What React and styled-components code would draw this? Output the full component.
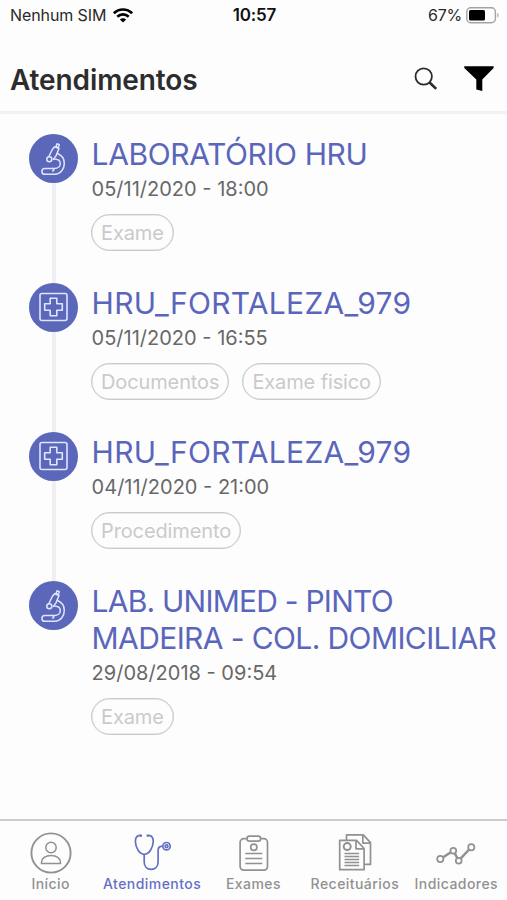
import React from "react";
import styled, { createGlobalStyle } from "styled-components";

const appointments = [
  { id: 1, type: "lab", name: ["LABORATÓRIO HRU"], spacing: [-0.4], date: "05/11/2020 - 18:00", tags: ["Exame"] },
  { id: 2, type: "hospital", name: ["HRU_FORTALEZA_979"], spacing: [0.3], date: "05/11/2020 - 16:55", tags: ["Documentos", "Exame fisico"] },
  { id: 3, type: "hospital", name: ["HRU_FORTALEZA_979"], spacing: [0.3], date: "04/11/2020 - 21:00", tags: ["Procedimento"] },
  { id: 4, type: "lab", name: ["LAB. UNIMED - PINTO", "MADEIRA - COL. DOMICILIAR"], spacing: [-0.78, -0.61], date: "29/08/2018 - 09:54", tags: ["Exame"] },
];

const MicroscopeIcon = () => (
  <svg width="49" height="49" viewBox="0 0 49 49" fill="none" stroke="#dfe4ff" strokeWidth="1.5" strokeLinejoin="round" strokeLinecap="round">
    <path d="M27 12.600l1-2.900 2.300.9-1 2.900z" />
    <path d="M25.600 12.700l4.400 1.800-3 7.400-2.600 3.500M25.600 12.700l-2.300 2.800-3.400 7" />
    <circle cx="20.300" cy="25.200" r="2.500" />
    <path d="M28.200 19.300c4 1.700 7.100 5.500 7.100 10.100 0 6-4 10.900-9.400 10.900H15.800a2.900 2.900 0 0 1 0-5.800h7.700c1.800 0 1.800 2.500 0 2.500" />
    <path d="M23.500 34.500h1.800c3.700 0 6-2.200 6-5.100 0-2.700-2.200-4.200-6.300-4.300" />
  </svg>
);

const HospitalIcon = () => (
  <svg width="49" height="49" viewBox="0 0 49 49" fill="none" stroke="#dfe4ff" strokeWidth="1.6" strokeLinejoin="round">
    <rect x="11" y="10.500" width="27" height="27" rx="2" />
    <path d="M21.200 15.200h6.600v5.500h5.500v6.600h-5.500v5.500h-6.600v-5.500h-5.500v-6.600h5.500z" />
  </svg>
);

const WifiIcon = () => (
  <svg width="20" height="15" viewBox="0 0 20 15" fill="none" stroke="#000" strokeWidth="2.700">
    <path d="M.9 5.300c5.200-5.100 13-5.100 18.200 0" />
    <path d="M4.300 8.800c3.300-3.200 8.100-3.200 11.400 0" />
    <path d="M6.900 11.500c1.800-1.700 4.400-1.700 6.200 0L10 14.600z" fill="#000" stroke="none" />
  </svg>
);

const BatteryIcon = () => (
  <svg width="33" height="17" viewBox="0 0 33 17">
    <rect x=".8" y=".8" width="28.600" height="15" rx="4" fill="none" stroke="#a3a3a3" strokeWidth="1.400" />
    <rect x="3" y="3" width="16" height="10.600" rx="1.500" fill="#000" />
    <path d="M31.300 6v4.600c1.700-.7 1.700-3.900 0-4.600z" fill="#a3a3a3" />
  </svg>
);

const SearchIcon = () => (
  <svg width="24" height="24" viewBox="0 0 24 24" fill="none" stroke="#2b2b2b">
    <circle cx="9.700" cy="9.500" r="8.200" strokeWidth="1.800" />
    <path d="M15.600 15.500l6.600 6.400" strokeWidth="2.600" />
  </svg>
);

const FilterIcon = () => (
  <svg width="30" height="26" viewBox="0 0 30 26" fill="#000">
    <path d="M.3.200h29.300v1.700L18.300 13.500v11.600l-6-1.500V13.500L.3 1.900z" />
  </svg>
);

const HomeIcon = () => (
  <svg width="42" height="42" viewBox="0 0 42 42" fill="none" stroke="currentColor">
    <circle cx="21" cy="21" r="19.600" strokeWidth="1.900" />
    <circle cx="21" cy="15.500" r="5.200" strokeWidth="1.500" />
    <path d="M11.500 31.500v-1.200c0-4 4-6.700 9.500-6.700s9.500 2.700 9.500 6.700v1.200z" strokeWidth="1.500" />
  </svg>
);

const StethoscopeIcon = () => (
  <svg width="42" height="42" viewBox="0 0 42 42" fill="none" stroke="currentColor" strokeWidth="1.700">
    <path d="M9.800 3.600H7.400c-1.900.7-3.100 2.900-3 6.200.2 6 4 12.500 8.900 12.500s8.700-6.500 8.900-12.500c.1-3.300-1.100-5.500-3-6.200h-2.400" />
    <path d="M9.900 2.500v2.300M16.700 2.500v2.300" strokeWidth="2.200" />
    <path d="M13.200 22.300v7.800c0 4.600 2.800 7.300 6.900 7.300s7-2.700 7-7.300V18.300c0-2.700 1.500-4 4.300-4.100" />
    <circle cx="35.500" cy="14.200" r="3.700" />
    <circle cx="35.500" cy="14.200" r="1.400" />
  </svg>
);

const ExamIcon = () => (
  <svg width="42" height="42" viewBox="0 0 42 42" fill="none" stroke="currentColor" strokeWidth="1.700">
    <path d="M14.500 6.700h-2.800a3.600 3.600 0 0 0-3.600 3.600v24.200a3.600 3.600 0 0 0 3.600 3.600h20.200a3.600 3.600 0 0 0 3.600-3.600V10.300a3.600 3.600 0 0 0-3.600-3.600h-2.800" />
    <rect x="15" y="4.200" width="13.600" height="5" rx="2.400" />
    <circle cx="21.800" cy="15.200" r="3.100" />
    <path d="M13.300 21.500h17M13.300 26.500h17M13.300 31.500h17" />
  </svg>
);

const PrescriptionIcon = () => (
  <svg width="42" height="42" viewBox="0 0 42 42" fill="none" stroke="currentColor" strokeWidth="1.700" strokeLinejoin="round">
    <path d="M12.500 8V2.900h16.700l7.300 7.800v21.700h-6" />
    <path d="M28.800 2.900v8.200h7.700" />
    <path d="M5.700 8.300h16.800l7.600 8.200v21.200H5.700z" />
    <path d="M22 8.300v8.500h8" />
    <circle cx="13.200" cy="14.600" r="3.500" strokeWidth="2" />
    <path d="M10.500 21.500h14.600M10.500 24.500h14.600M10.500 27.500h14.600M10.500 30.500h14.600M10.500 33.500h14.600" strokeWidth="1.300" />
  </svg>
);

const IndicatorIcon = () => (
  <svg width="42" height="42" viewBox="0 0 42 42" fill="none" stroke="currentColor" strokeWidth="1.700">
    <path d="M8.200 25.200l7.300-4.700M19.800 21.300l2.500 4.700M25.800 26.400l8.300-8.900" strokeWidth="2.500" />
    <circle cx="5.300" cy="27" r="3.100" />
    <circle cx="18.300" cy="18.700" r="2.900" />
    <circle cx="23.700" cy="28.700" r="2.900" />
    <circle cx="36.300" cy="15.300" r="3.100" />
  </svg>
);

const tabs = [
  { label: "Início", Icon: HomeIcon },
  { label: "Atendimentos", Icon: StethoscopeIcon, active: true },
  { label: "Exames", Icon: ExamIcon },
  { label: "Receituários", Icon: PrescriptionIcon },
  { label: "Indicadores", Icon: IndicatorIcon },
];

const App = () => {
  return (
    <Screen>
      <GlobalStyle />
      <StatusBar>
        <Carrier><span>Nenhum SIM</span><WifiIcon /></Carrier>
        <Clock>10:57</Clock>
        <Battery><span>67%</span><BatteryIcon /></Battery>
      </StatusBar>
      <Header>
        <h1>Atendimentos</h1>
        <Actions>
          <IconButton type="button" aria-label="Buscar"><SearchIcon /></IconButton>
          <IconButton type="button" aria-label="Filtrar"><FilterIcon /></IconButton>
        </Actions>
      </Header>
      <Timeline>
        {appointments.map((item) => {
          return (
            <Appointment key={item.id}>
              <Rail>
                <Badge>{item.type === "lab" ? <MicroscopeIcon /> : <HospitalIcon />}</Badge>
              </Rail>
              <Details>
                <Name>
                  {item.name.map((line, index) => (
                    <NameLine key={line} $spacing={item.spacing[index]}>{line}</NameLine>
                  ))}
                </Name>
                <DateText>{item.date}</DateText>
                <Tags>
                  {item.tags.map((tag) => <Tag key={tag}>{tag}</Tag>)}
                </Tags>
              </Details>
            </Appointment>
          )
        })}
      </Timeline>
      <TabBar>
        {tabs.map(({ label, Icon, active }) => (
          <Tab key={label} type="button" $active={active}>
            <Icon />
            <span>{label}</span>
          </Tab>
        ))}
      </TabBar>
    </Screen>
  )
}

export default App

const GlobalStyle = createGlobalStyle`
  * {
    box-sizing: border-box;
  }
  body {
    margin: 0;
    background-color: #fdfdfd;
    font-family: Inter, "Liberation Sans", sans-serif;
  }
  svg {
    display: block;
    flex-shrink: 0;
  }
`

const Screen = styled.main`
  display: flex;
  flex-direction: column;
  width: 507px;
  height: 900px;
  overflow: hidden;
  background-color: #fdfdfd;
`

const StatusBar = styled.div`
  display: grid;
  grid-template-columns: 1fr auto 1fr;
  align-items: center;
  height: 30px;
  padding: 0 8px 0 10px;
  font-size: 16px;
  color: #2a2a2a;
`

const Carrier = styled.div`
  display: flex;
  align-items: center;
  gap: 7px;
  letter-spacing: -0.1px;
`

const Clock = styled.div`
  font-weight: 600;
  font-size: 17px;
  letter-spacing: -0.2px;
  color: #111;
`

const Battery = styled.div`
  display: flex;
  align-items: center;
  justify-content: flex-end;
  gap: 4px;
  letter-spacing: -0.2px;
`

const Header = styled.header`
  display: flex;
  align-items: center;
  justify-content: space-between;
  height: 84px;
  padding: 16px 13px 0 10px;
  border-bottom: 3px solid #f2f2f2;
  & h1 {
    margin: 2px 0 0;
    font-size: 28px;
    font-weight: 600;
    letter-spacing: -0.1px;
    color: #2d2d2d;
  }
`

const Actions = styled.div`
  display: flex;
  align-items: center;
  gap: 26px;
`

const IconButton = styled.button`
  padding: 0;
  border: none;
  background: none;
`

const Timeline = styled.section`
  flex: 1;
  padding: 20px 0 0 29px;
`

const Rail = styled.div`
  display: flex;
  flex-direction: column;
  align-items: center;
  width: 49px;
  &::after {
    content: "";
    flex: 1;
    width: 4px;
    background-color: #f0f0f2;
  }
`

const Appointment = styled.article`
  display: flex;
  gap: 13px;
  min-height: 149px;
  &:last-child ${Rail}::after {
    display: none;
  }
`

const Badge = styled.div`
  width: 49px;
  height: 49px;
  border-radius: 50%;
  background-color: #5b68ba;
`

const Details = styled.div`
  padding-top: 2px;
`

const Name = styled.h2`
  margin: 0 0 0 0.6px;
  font-size: 30px;
  font-weight: 400;
  line-height: 37px;
  color: #5a66bb;
`

const NameLine = styled.span`
  display: block;
  white-space: nowrap;
  letter-spacing: ${(props) => props.$spacing}px;
`

const DateText = styled.p`
  margin: 4px 0 0 0.6px;
  font-size: 20px;
  line-height: 25px;
  color: #686868;
`

const Tags = styled.div`
  display: flex;
  gap: 13px;
  margin-top: 12px;
`

const Tag = styled.span`
  height: 37px;
  padding: 1px 9px 0;
  border: 1px solid #c9c9c9;
  border-radius: 19px;
  box-shadow: inset 0 0 0 0.5px #d6d6d6;
  font-size: 20px;
  line-height: 35px;
  letter-spacing: -0.12px;
  white-space: nowrap;
  color: #cacaca;
`

const TabBar = styled.nav`
  display: grid;
  grid-template-columns: repeat(5, 1fr);
  height: 81px;
  border-top: 2px solid #cdcdcd;
`

const Tab = styled.button`
  display: flex;
  flex-direction: column;
  align-items: center;
  padding: 11px 0 0;
  border: none;
  background: none;
  font-family: inherit;
  font-size: 14px;
  font-weight: 500;
  line-height: 20px;
  letter-spacing: 0.45px;
  white-space: nowrap;
  color: ${(props) => (props.$active ? "#6470c4" : "#919191")};
`
